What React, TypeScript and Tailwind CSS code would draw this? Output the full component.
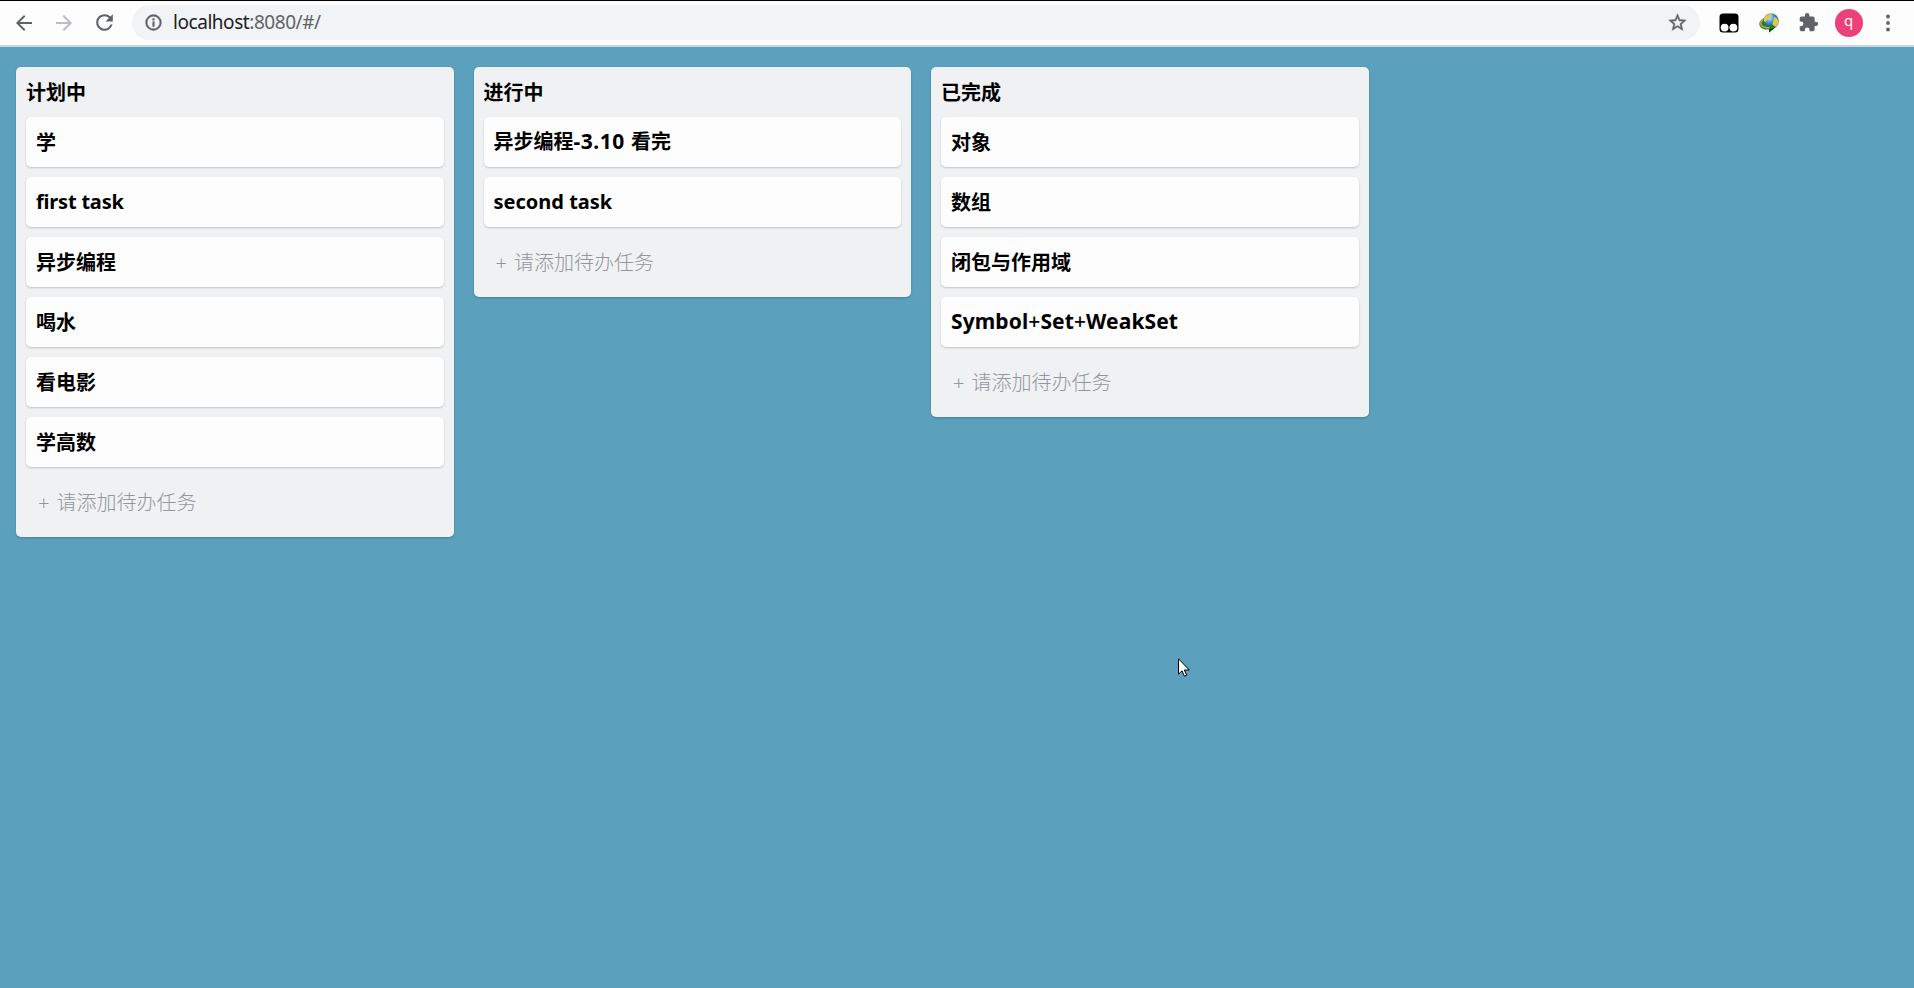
import type { ReactNode } from "react";

interface Task {
  label: ReactNode;
  key: string;
  latin?: boolean;
}

const columns: { title: string; tasks: Task[] }[] = [
  {
    title: "计划中",
    tasks: [
      { key: "a", label: "学" },
      { key: "b", latin: true, label: <span className="tracking-[-0.2px]">first task</span> },
      { key: "c", label: "异步编程" },
      { key: "d", label: "喝水" },
      { key: "e", label: "看电影" },
      { key: "f", label: "学高数" },
    ],
  },
  {
    title: "进行中",
    tasks: [
      { key: "g", latin: true, label: <>异步编程<span className="text-[21px] leading-none tracking-[0.55px]">-3.10 </span>看完</> },
      { key: "h", latin: true, label: "second task" },
    ],
  },
  {
    title: "已完成",
    tasks: [
      { key: "i", label: "对象" },
      { key: "j", label: "数组" },
      { key: "k", label: "闭包与作用域" },
      {
        key: "l",
        latin: true,
        label: (
          <span className="text-[21px] leading-none tracking-[0.1px]">
            Symbol<span className="font-medium">+</span>Set<span className="font-medium">+</span>WeakSet
          </span>
        ),
      },
    ],
  },
];

function Icon({ children, className }: { children: ReactNode; className: string }) {
  return (
    <svg viewBox="0 0 24 24" fill="currentColor" className={`shrink-0 ${className}`}>
      {children}
    </svg>
  );
}

function Toolbar() {
  return (
    <header className="flex h-[47px] items-center border-t border-b-2 border-t-black border-b-[#cdd3da] bg-[#fdfdfe] pb-px pl-[11.5px] text-[#5f6368]">
      <Icon className="size-6">
        <path d="M20 11H7.8l5.6-5.6L12 4l-8 8 8 8 1.4-1.4L7.8 13H20z" />
      </Icon>
      <Icon className="ml-4 size-6 text-[#babcc4]">
        <path d="M4 11h12.2l-5.6-5.6L12 4l8 8-8 8-1.4-1.4 5.6-5.6H4z" />
      </Icon>
      <Icon className="ml-4 size-[25px]">
        <path d="M17.65 6.35A7.96 7.96 0 0 0 12 4a8 8 0 1 0 7.73 10h-2.08A6 6 0 1 1 12 6c1.66 0 3.14.69 4.22 1.78L13 11h7V4z" />
      </Icon>
      <div className="ml-[15.5px] flex h-[35px] w-[1568px] items-center rounded-full bg-[#f1f3f4] pl-3 pr-3">
        <Icon className="size-[19px]">
          <path d="M11 17h2v-6h-2zm1-15a10 10 0 1 0 0 20 10 10 0 0 0 0-20m0 18a8 8 0 1 1 0-16 8 8 0 0 1 0 16M11 9h2V7h-2z" stroke="currentColor" strokeWidth="0.6" />
        </Icon>
        <span className="ml-[10px] flex-1 pb-[2px] text-[19px] leading-6 tracking-[-0.45px] text-[#5f6368]">
          <span className="text-[#202124]">localhost</span>:8080/#/
        </span>
        <Icon className="size-[21px]">
          <path d="m22 9.24-7.19-.62L12 2 9.19 8.63 2 9.24l5.46 4.73L5.82 21 12 17.27 18.18 21l-1.63-7.03zM12 15.4l-3.76 2.27 1-4.28-3.32-2.88 4.38-.38L12 6.1l1.71 4.04 4.38.38-3.32 2.88 1 4.28z" stroke="currentColor" strokeWidth="0.5" />
        </Icon>
      </div>
      <svg viewBox="0 0 20 20" className="ml-[18.5px] size-5 shrink-0">
        <rect x="0.5" y="0.5" width="19" height="19" rx="3.5" fill="#000" />
        <circle cx="5.6" cy="14.6" r="3.9" fill="#fff" />
        <circle cx="14.4" cy="14.6" r="3.9" fill="#fff" />
      </svg>
      <svg viewBox="0 0 20 20" className="ml-5 size-5 shrink-0">
        <defs>
          <radialGradient id="globe" cx="0.4" cy="0.3" r="0.75">
            <stop offset="0" stopColor="#b9e3ff" />
            <stop offset="0.45" stopColor="#3d8ed6" />
            <stop offset="1" stopColor="#0c356e" />
          </radialGradient>
        </defs>
        <circle cx="12" cy="8" r="7.7" fill="url(#globe)" />
        <path d="M7 3c2-2 5-2.500 6-1.500l-1 3-3 1-2 3-3 .5C4 6 5 4 7 3m8 1 3 1 1.700 4-2.500 5-3 .5-1-3 1-3z" fill="#e0c94a" />
        <path d="M5 5C1 7-.5 10 .8 13c1.500 3 5.500 4 9.200 3.500v3l7-5.500-6-4v3C7.500 13.500 4.500 11.500 5 5" fill="#26821f" />
        <path d="M4.500 6C2 8 1 10.500 2.500 12.500c1.500 2 5 2.500 8 2" fill="none" stroke="#d9a066" strokeWidth="1.300" />
        <path d="m10 16.500 6-2-6 5z" fill="#143d16" />
      </svg>
      <Icon className="ml-[19px] size-[21px]">
        <path d="M20.500 11H19V7a2 2 0 0 0-2-2h-4V3.500a2.500 2.500 0 0 0-5 0V5H4a2 2 0 0 0-1.990 2v3.800H3.500a2.700 2.700 0 0 1 0 5.400H2V20a2 2 0 0 0 2 2h3.800v-1.500a2.700 2.700 0 0 1 5.400 0V22H17a2 2 0 0 0 2-2v-4h1.500a2.500 2.500 0 0 0 0-5" />
      </Icon>
      <div className="ml-[16px] flex size-7 shrink-0 items-center justify-center rounded-full bg-[#ec407a] pb-[4px] text-[15px] leading-none text-white">
        q
      </div>
      <Icon className="ml-[13.5px] size-6">
        <circle cx="12" cy="5.500" r="1.900" />
        <circle cx="12" cy="12" r="1.900" />
        <circle cx="12" cy="18.500" r="1.900" />
      </Icon>
    </header>
  );
}

export default function App() {
  return (
    <div className="relative flex h-[988px] w-[1914px] flex-col overflow-hidden bg-[#5ba0bc] font-['Noto_Sans','Noto_Sans_CJK_SC',sans-serif]">
      <Toolbar />
      <main className="flex items-start gap-5 px-4 pt-5">
        {columns.map((column) => (
          <section key={column.title} className="w-[437.5px] rounded-[5px] bg-[#f0f1f2] p-[10px] shadow-[0_1px_2px_rgba(40,70,110,0.4)]">
            <h2 className="mb-[10px] h-[30px] pt-px text-[20px] leading-[30px] font-bold text-black">{column.title}</h2>
            <ul className="flex flex-col gap-[10px]">
              {column.tasks.map((task) => (
                <li
                  key={task.key}
                  className={`h-[50px] rounded-[5px] bg-[#fdfdfe] px-[10px] text-[20px] leading-[50px] font-bold text-black shadow-[0_1px_2px_rgba(0,0,0,0.2)] ${task.latin ? "pt-0" : "pt-px"}`}
                >
                  {task.label}
                </li>
              ))}
            </ul>
            <div className="mt-[10px] flex h-[50px] items-center gap-[7px] pt-px pl-3 text-[20px] leading-[50px] font-light text-[#94969e]">
              <span>+</span>
              <span>请添加待办任务</span>
            </div>
          </section>
        ))}
      </main>
      <svg viewBox="0 0 12 19" className="absolute left-[1178px] top-[658px] h-[19px] w-3">
        <path d="M.5.800v15.400l3.500-3.400 2.400 5.400 2.300-1-2.400-5.200h5z" fill="#fff" stroke="#000" />
      </svg>
    </div>
  );
}
